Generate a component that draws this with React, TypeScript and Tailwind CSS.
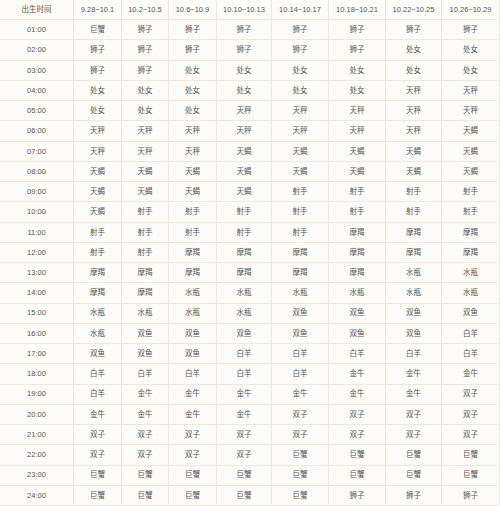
import React from "react";

const header = ["出生时间", "9.28~10.1", "10.2~10.5", "10.6~10.9", "10.10~10.13", "10.14~10.17", "10.18~10.21", "10.22~10.25", "10.26~10.29"];

const rows: string[][] = [
  ["01:00", "巨蟹", "狮子", "狮子", "狮子", "狮子", "狮子", "狮子", "狮子"],
  ["02:00", "狮子", "狮子", "狮子", "狮子", "狮子", "狮子", "处女", "处女"],
  ["03:00", "狮子", "狮子", "处女", "处女", "处女", "处女", "处女", "处女"],
  ["04:00", "处女", "处女", "处女", "处女", "处女", "处女", "天秤", "天秤"],
  ["05:00", "处女", "处女", "处女", "天秤", "天秤", "天秤", "天秤", "天秤"],
  ["06:00", "天秤", "天秤", "天秤", "天秤", "天秤", "天秤", "天秤", "天蝎"],
  ["07:00", "天秤", "天秤", "天秤", "天蝎", "天蝎", "天蝎", "天蝎", "天蝎"],
  ["08:00", "天蝎", "天蝎", "天蝎", "天蝎", "天蝎", "天蝎", "天蝎", "天蝎"],
  ["09:00", "天蝎", "天蝎", "天蝎", "天蝎", "射手", "射手", "射手", "射手"],
  ["10:00", "天蝎", "射手", "射手", "射手", "射手", "射手", "射手", "射手"],
  ["11:00", "射手", "射手", "射手", "射手", "射手", "摩羯", "摩羯", "摩羯"],
  ["12:00", "射手", "射手", "摩羯", "摩羯", "摩羯", "摩羯", "摩羯", "摩羯"],
  ["13:00", "摩羯", "摩羯", "摩羯", "摩羯", "摩羯", "摩羯", "水瓶", "水瓶"],
  ["14:00", "摩羯", "摩羯", "水瓶", "水瓶", "水瓶", "水瓶", "水瓶", "水瓶"],
  ["15:00", "水瓶", "水瓶", "水瓶", "水瓶", "双鱼", "双鱼", "双鱼", "双鱼"],
  ["16:00", "水瓶", "双鱼", "双鱼", "双鱼", "双鱼", "双鱼", "双鱼", "白羊"],
  ["17:00", "双鱼", "双鱼", "双鱼", "白羊", "白羊", "白羊", "白羊", "白羊"],
  ["18:00", "白羊", "白羊", "白羊", "白羊", "白羊", "金牛", "金牛", "金牛"],
  ["19:00", "白羊", "金牛", "金牛", "金牛", "金牛", "金牛", "金牛", "双子"],
  ["20:00", "金牛", "金牛", "金牛", "金牛", "双子", "双子", "双子", "双子"],
  ["21:00", "双子", "双子", "双子", "双子", "双子", "双子", "双子", "双子"],
  ["22:00", "双子", "双子", "双子", "双子", "巨蟹", "巨蟹", "巨蟹", "巨蟹"],
  ["23:00", "巨蟹", "巨蟹", "巨蟹", "巨蟹", "巨蟹", "巨蟹", "巨蟹", "巨蟹"],
  ["24:00", "巨蟹", "巨蟹", "巨蟹", "巨蟹", "巨蟹", "狮子", "狮子", "狮子"],
];

export default function App() {
  const all = [header, ...rows];
  return (
    <div
      className="w-[500px] h-[506px] bg-[#fdfcf8] overflow-hidden grid grid-cols-[74px_48px_47px_48px_55px_57px_57px_56px_58px] grid-rows-[repeat(25,minmax(0,1fr))] text-[7.5px] text-[#555] leading-none"
      style={{ fontFamily: '"Liberation Sans", "Noto Sans CJK SC", sans-serif' }}
    >
      {all.map((r, ri) =>
        r.map((c, ci) => (
          <div
            key={`${ri}-${ci}`}
            className="flex items-center justify-center border-r border-b border-[#eee8dd] whitespace-nowrap"
          >
            {c}
          </div>
        ))
      )}
    </div>
  );
}
